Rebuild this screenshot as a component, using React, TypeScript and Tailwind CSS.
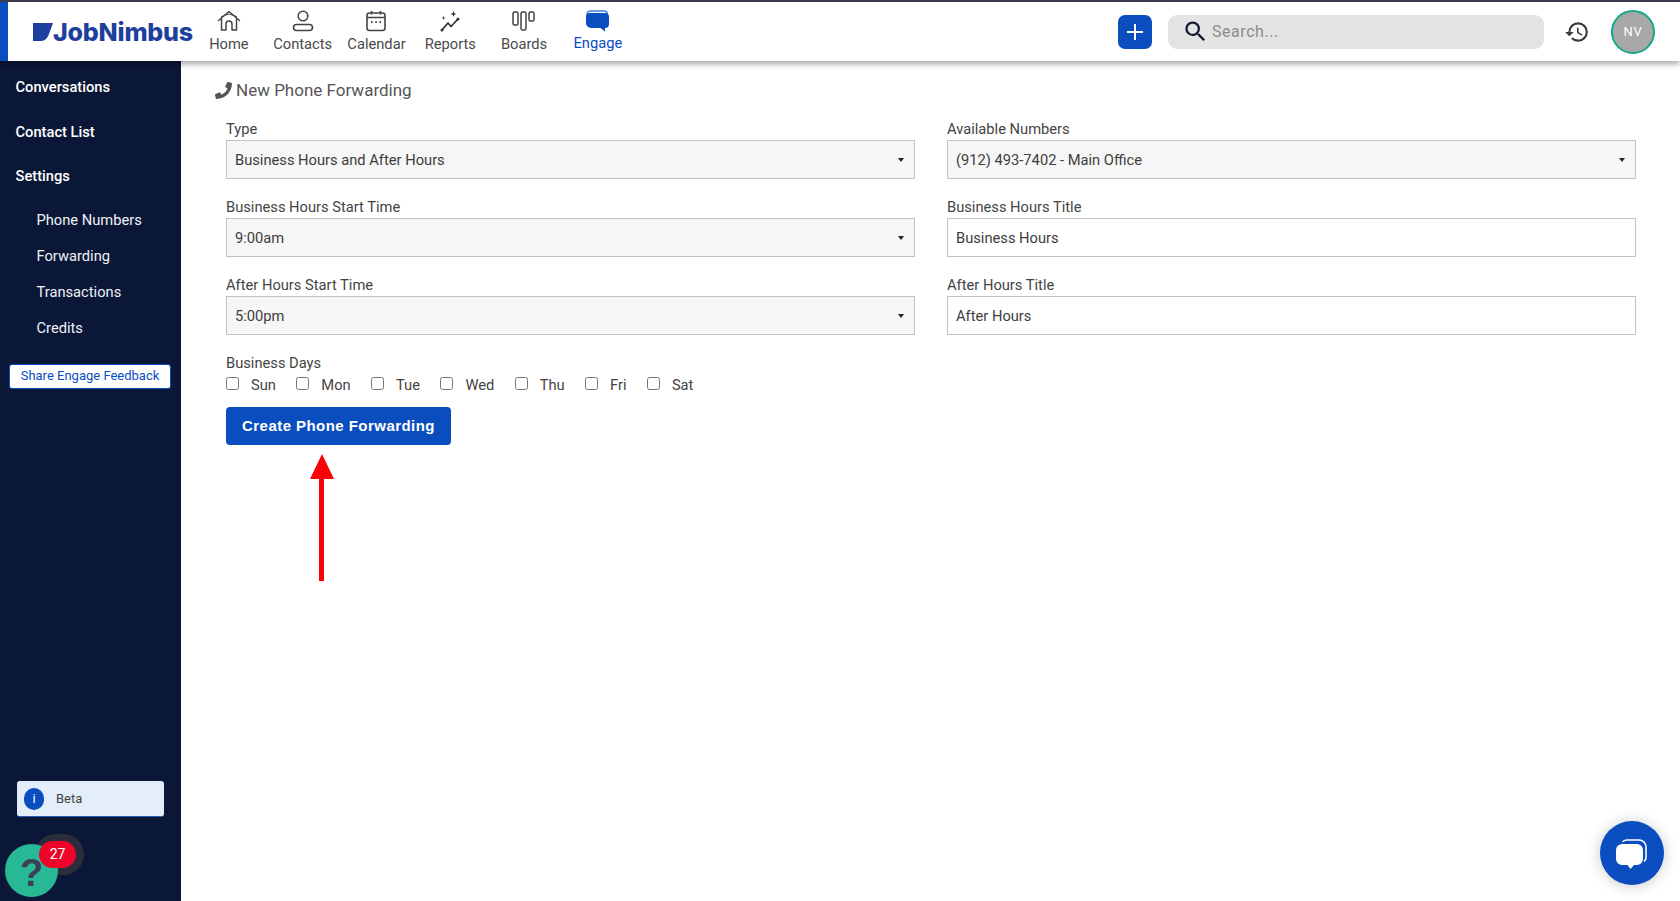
import { FaPhoneAlt } from "react-icons/fa";
import { MdHistory, MdSearch } from "react-icons/md";

const HomeIcon = () => (
  <svg width="24" height="22" viewBox="0 0 24 22" fill="none" stroke="#444" strokeWidth="1.5" strokeLinejoin="round" strokeLinecap="round">
    <path d="M1.5 10.5 12 1.5l10.500 9" />
    <path d="M4.500 9v11h4.500v-6a3 3 0 0 1 6 0v6h4.500V9" />
    <path d="M4.500 6.500 12 4l7.500 2.500" strokeWidth="1" />
  </svg>
);

const ContactsIcon = () => (
  <svg width="22" height="22" viewBox="0 0 22 22" fill="none" stroke="#444" strokeWidth="1.6">
    <circle cx="11" cy="6" r="4.800" />
    <rect x="1.500" y="14.500" width="19" height="6" rx="3" />
  </svg>
);

const CalendarIcon = () => (
  <svg width="22" height="22" viewBox="0 0 22 22" fill="none" stroke="#444" strokeWidth="1.600">
    <rect x="2" y="3" width="18" height="17.500" rx="2.500" />
    <path d="M2 7.500h18M6.500 1v3.500M15.500 1v3.500" />
    <path d="M6 12h1.500M10.300 12h1.500M14.500 12H16" strokeWidth="2" />
  </svg>
);

const ReportsIcon = () => (
  <svg width="22" height="22" viewBox="0 0 22 22" fill="none">
    <path d="M3 20 9 13l3 3.500 7-7.500" stroke="#333" strokeWidth="1.800" strokeLinejoin="round" />
    <circle cx="3" cy="20" r="1.500" fill="#333" />
    <circle cx="19" cy="9" r="1.500" fill="#333" />
    <path d="M14.500 1l.8 2.200 2.200.8-2.200.8-.8 2.200-.8-2.200-2.200-.8 2.200-.8zM4.500 6l.5 1.500 1.500.5-1.500.5-.5 1.500-.5-1.500L2.500 8l1.500-.5z" fill="#333" />
  </svg>
);

const BoardsIcon = () => (
  <svg width="24" height="20" viewBox="0 0 24 20" fill="none" stroke="#444" strokeWidth="1.500">
    <rect x="1" y="1" width="5" height="13" rx="1.500" />
    <rect x="9" y="1" width="5" height="18" rx="1.500" />
    <rect x="17" y="1" width="5" height="9" rx="1.500" />
  </svg>
);

const EngageIcon = () => (
  <svg width="25" height="22" viewBox="0 0 25 22" fill="none">
    <path d="M2 7V4.500A3.500 3.500 0 0 1 5.500 1H19a3.500 3.500 0 0 1 3.500 3" stroke="#3c7fe0" strokeWidth="1.500" />
    <path d="M5 3h15a4 4 0 0 1 4 4v7a4 4 0 0 1-4 3.900v3.600l-4.500-3.500H6a5 5 0 0 1-5-5V7a4 4 0 0 1 4-4z" fill="#0a4dbf" />
  </svg>
);

const ChatIcon = () => (
  <svg width="34" height="32" viewBox="0 0 34 32" fill="none">
    <path d="M8 3.500c1-1 2.500-1.500 4-1.500h12a7 7 0 0 1 7 7v10c0 1.500-.5 3-1.500 4" stroke="#fff" strokeWidth="1.600" strokeLinecap="round" />
    <path d="M7 6h15a6 6 0 0 1 6 6v9a6 6 0 0 1-6 6h-3l-3.500 4-3-4H7a6 6 0 0 1-6-6v-9a6 6 0 0 1 6-6z" fill="#fff" />
  </svg>
);

const navItems = [
  { label: "Home", icon: <HomeIcon /> },
  { label: "Contacts", icon: <ContactsIcon /> },
  { label: "Calendar", icon: <CalendarIcon /> },
  { label: "Reports", icon: <ReportsIcon /> },
  { label: "Boards", icon: <BoardsIcon /> },
];

const days = ["Sun", "Mon", "Tue", "Wed", "Thu", "Fri", "Sat"];

function NavItem({ label, icon, active }: { label: string; icon: React.ReactNode; active?: boolean }) {
  return (
    <div className={`flex h-full w-[73.8px] flex-col items-center pt-[7px] text-[14.7px] leading-[20px] ${active ? "text-[#0a4dbf]" : "text-[#4a4a4a]"}`}>
      <div className="flex h-[23px] items-center justify-center">{icon}</div>
      <span className={active ? "mt-[1px]" : "mt-[2px]"}>{label}</span>
    </div>
  );
}

function SelectField({ label, value }: { label: string; value: string }) {
  return (
    <div>
      <div className="h-[21px] text-[14.7px] leading-[21px] text-[#444]">{label}</div>
      <div className="relative h-[39px]">
        <select
          defaultValue={value}
          className="h-full w-full appearance-none rounded-none border border-[#c2c2c2] bg-[#f6f6f6] px-[8px] pt-[1px] text-[14.7px] text-[#3d3d3d] outline-none"
        >
          <option>{value}</option>
        </select>
        <span className="pointer-events-none absolute right-[11px] top-[18px] h-0 w-0 border-x-[3.500px] border-t-[4px] border-x-transparent border-t-[#222]" />
      </div>
    </div>
  );
}

function InputField({ label, value }: { label: string; value: string }) {
  return (
    <div>
      <div className="h-[21px] text-[14.7px] leading-[21px] text-[#444]">{label}</div>
      <input
        defaultValue={value}
        className="block h-[39px] w-full border border-[#c2c2c2] bg-white px-[8px] text-[14.7px] text-[#3d3d3d] outline-none"
      />
    </div>
  );
}

export default function App() {
  return (
    <div className="relative flex h-[901px] flex-col overflow-hidden bg-white font-['Roboto',sans-serif]">
      <header className="relative z-10 flex h-[61px] shrink-0 items-stretch border-t-2 border-[#3b3b4b] bg-white shadow-[0_3px_6px_rgba(0,0,0,0.35)]">
        <div className="w-2 bg-[#0a4dbf]" />
        <div className="flex w-[184px] items-center pl-[25px] pt-[1px]">
          <svg width="20" height="18" viewBox="0 0 20 18" className="shrink-0">
            <path d="M0 0h20l-4 11c-1.500 4-4 7-8 7H0z" fill="#1f3f9c" />
          </svg>
          <span className="font-['Inter',sans-serif] text-[25px] font-extrabold leading-none tracking-[-0.2px] text-[#1f3f9c]">JobNimbus</span>
        </div>
        <nav className="flex items-stretch">
          {navItems.map((item) => (
            <NavItem key={item.label} label={item.label} icon={item.icon} />
          ))}
          <NavItem label="Engage" icon={<EngageIcon />} active />
        </nav>
        <div className="ml-auto flex items-center pr-[25px]">
          <button className="flex h-[34px] w-[34px] items-center justify-center rounded-[7px] bg-[#0a4dbf]">
            <svg width="16" height="16" viewBox="0 0 16 16" stroke="#fff" strokeWidth="2">
              <path d="M8 0v16M0 8h16" />
            </svg>
          </button>
          <div className="ml-[16.500px] flex h-[34px] w-[376px] items-center rounded-[9px] bg-[#e4e4e4] pl-[14px]">
            <MdSearch size={27} className="text-[#10172e]" />
            <span className="ml-[3px] text-[16px] tracking-[0.55px] text-[#8c8c8c]">Search...</span>
          </div>
          <MdHistory size={26} className="ml-[20px] text-[#3a3a3a]" />
          <div className="ml-[21px] flex h-[44px] w-[44px] items-center justify-center rounded-full border-2 border-[#17a689] bg-[#a8a8a8] text-[13px] tracking-[0.8px] text-white">
            NV
          </div>
        </div>
      </header>

      <div className="flex min-h-0 flex-1">
        <aside className="flex w-[181px] shrink-0 flex-col bg-[#0b1736] pt-[4px] text-white">
          {["Conversations", "Contact List", "Settings"].map((name) => (
            <div key={name} className="flex h-[44.500px] items-center pl-[15.5px] text-[14.7px] font-medium">
              {name}
            </div>
          ))}
          <div className="mt-[3.500px]">
            {["Phone Numbers", "Forwarding", "Transactions", "Credits"].map((name) => (
              <div key={name} className="flex h-[36px] items-center pl-[36.5px] text-[14.7px] text-[#eef1f6]">
                {name}
              </div>
            ))}
          </div>
          <button className="ml-[9px] mt-[18px] h-[25px] w-[162px] rounded-[3px] border border-[#0a4dbf] bg-white pb-[1px] text-[13px] text-[#0a4dbf]">
            Share Engage Feedback
          </button>
          <div className="mb-[84px] ml-[17px] mt-auto flex h-[36px] w-[147px] items-center rounded-[3px] border-b border-[#2a5db5] bg-[#e3eefa] pl-[7px] pt-[1px]">
            <span className="flex h-[22px] w-[20px] items-center justify-center rounded-full bg-[#0a4dbf] text-[13px] text-white">i</span>
            <span className="ml-[12px] text-[13px] text-[#444]">Beta</span>
          </div>
        </aside>

        <main className="flex-1 pl-[34px]">
          <h1 className="mt-[17.5px] flex h-[24px] items-center text-[17px] font-normal text-[#555]">
            <FaPhoneAlt size={17} className="mr-[4px] -scale-x-100 text-[#555]" />
            New Phone Forwarding
          </h1>
          <div className="ml-[11px] mt-[16.5px] w-[1410px]">
            <div className="grid grid-cols-2 gap-x-[32px] gap-y-[18px]">
              <SelectField label="Type" value="Business Hours and After Hours" />
              <SelectField label="Available Numbers" value="(912) 493-7402 - Main Office" />
              <SelectField label="Business Hours Start Time" value="9:00am" />
              <InputField label="Business Hours Title" value="Business Hours" />
              <SelectField label="After Hours Start Time" value="5:00pm" />
              <InputField label="After Hours Title" value="After Hours" />
            </div>
            <div className="mt-[18px] h-[21px] text-[14.7px] leading-[21px] text-[#444]">Business Days</div>
            <div className="flex h-[21px] items-center pt-[2px] text-[14.7px] text-[#444]">
              {days.map((day) => (
                <label key={day} className="mr-[20.4px] flex items-center gap-[12px]">
                  <input type="checkbox" className="m-0 mb-[5px] h-[13px] w-[13px]" />
                  {day}
                </label>
              ))}
            </div>
            <button className="mt-[12px] h-[38px] w-[225px] rounded-[4px] bg-[#0a4dbf] font-['Liberation_Sans',sans-serif] text-[15px] font-bold tracking-[0.45px] text-white">
              Create Phone Forwarding
            </button>
          </div>
        </main>
      </div>

      {/* red annotation arrow */}
      <svg width="26" height="128" viewBox="0 0 26 128" className="absolute left-[309px] top-[454px]">
        <path d="M13 0 25 25H15v102h-5V25H1z" fill="#fb0007" />
      </svg>

      {/* help widget */}
      <div className="absolute left-[35px] top-[834px] h-[41px] w-[49px] rounded-full bg-[#2b2d3c]" />
      <div className="absolute left-[5px] top-[844px] flex h-[53px] w-[53px] items-center justify-center rounded-full bg-[#27b896] pt-[5px] font-['Liberation_Sans',sans-serif] text-[38px] font-bold text-[#3a4156]">
        ?
      </div>
      <div className="absolute left-[39px] top-[841px] flex h-[27px] w-[37px] items-center justify-center rounded-[14px] bg-[#ee0429] text-[14px] text-white">
        27
      </div>

      {/* chat launcher */}
      <button className="absolute left-[1600px] top-[821px] flex h-[64px] w-[64px] items-center justify-center rounded-full bg-[#0a4dbf] pt-[2px] shadow-[0_1px_14px_rgba(0,0,0,0.22)]">
        <ChatIcon />
      </button>
    </div>
  );
}
